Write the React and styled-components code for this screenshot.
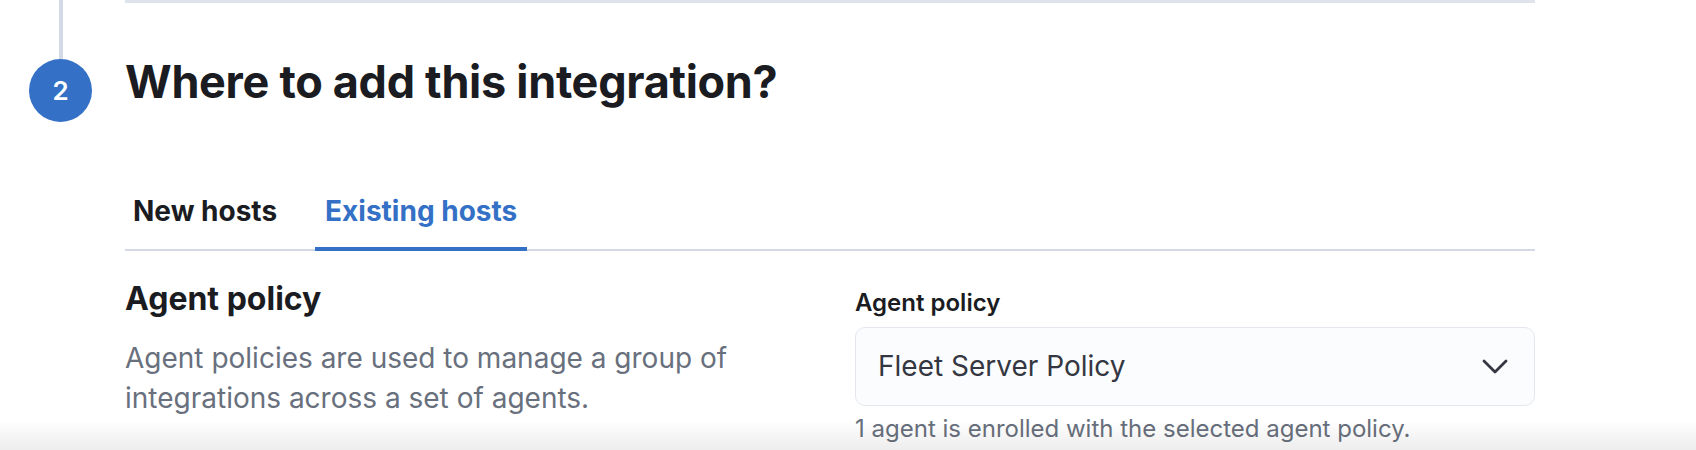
import React, { useState } from 'react'
import styled, { createGlobalStyle } from 'styled-components'

const GlobalStyle = createGlobalStyle`
	html, body {
		margin: 0;
		padding: 0;
		background: #ffffff;
		overflow: hidden;
	}
	body {
		font-family: Inter, 'Noto Sans', 'Liberation Sans', sans-serif;
		color: #1a1c21;
	}
	#root {
		height: 450px;
	}
`

const tabs = ['New hosts', 'Existing hosts']

const App = () => {
	const [active, setActive] = useState('Existing hosts')

	return (
		<>
			<GlobalStyle />
			<Step>
				<Connector />
				<Divider />
				<StepNumber>2</StepNumber>
				<Title>Where to add this integration?</Title>
				<span />
				<Body>
					<TabBar>
						{tabs.map((t) => (
							<Tab key={t} active={t === active} onClick={() => setActive(t)}>
								{t}
							</Tab>
						))}
					</TabBar>
					<FormRow>
						<Description>
							<h3>Agent policy</h3>
							<p>
								Agent policies are used to manage a group of integrations across a
								set of agents.
							</p>
						</Description>
						<Field>
							<Label>Agent policy</Label>
							<Select>
								<span>Fleet Server Policy</span>
								<svg width='26' height='15' viewBox='0 0 26 15' fill='none'>
									<path
										d='M2 2l11 11L24 2'
										stroke='#343741'
										strokeWidth='2.8'
										strokeLinecap='round'
										strokeLinejoin='round'
									/>
								</svg>
							</Select>
							<Help>1 agent is enrolled with the selected agent policy.</Help>
						</Field>
					</FormRow>
				</Body>
			</Step>
			<BottomShade />
		</>
	)
}

const Step = styled.section`
	display: grid;
	grid-template-columns: 63px 1410px;
	column-gap: 33px;
	padding-left: 29px;
`

const Connector = styled.div`
	justify-self: center;
	width: 4px;
	height: 59px;
	background: #d3dae6;
`

const Divider = styled.div`
	align-self: start;
	height: 3px;
	background: #dfe4ec;
`

const StepNumber = styled.div`
	width: 63px;
	height: 63px;
	border-radius: 50%;
	background: #3471c6;
	color: #ffffff;
	display: flex;
	align-items: center;
	justify-content: center;
	font-size: 26px;
	font-weight: 600;
`

const Title = styled.h2`
	margin: -4px 0 0;
	align-self: start;
	font-size: 45px;
	line-height: 1.2;
	font-weight: 700;
	letter-spacing: -0.3px;
	color: #1a1c21;
`

const Body = styled.div`
	display: flex;
	flex-direction: column;
`

const TabBar = styled.div`
	display: flex;
	gap: 28px;
	margin-top: 57px;
	padding-left: 0;
	box-shadow: inset 0 -2px 0 #d3dae6;
`

const Tab = styled.button`
	background: transparent;
	border: none;
	border-bottom: 4px solid ${(p) => (p.active ? '#3471c6' : 'transparent')};
	padding: 16px 10px 18px;
	font-family: inherit;
	font-size: 28px;
	line-height: 1.2;
	font-weight: 700;
	color: ${(p) => (p.active ? '#3471c6' : '#1a1c21')};
	cursor: pointer;

	&:first-child {
		padding-left: 8px;
	}
`

const FormRow = styled.div`
	display: grid;
	grid-template-columns: 1fr 680px;
	column-gap: 90px;
	margin-top: 29px;
`

const Description = styled.div`
	h3 {
		margin: 0;
		font-size: 32px;
		line-height: 1.2;
		font-weight: 700;
		color: #1a1c21;
	}
	p {
		margin: 20px 0 0;
		font-size: 28px;
		line-height: 40px;
		color: #69707d;
	}
`

const Field = styled.div`
	display: flex;
	flex-direction: column;
	padding-top: 9px;
`

const Label = styled.label`
	font-size: 24px;
	line-height: 1.2;
	font-weight: 600;
	color: #1a1c21;
`

const Select = styled.div`
	margin-top: 10px;
	height: 79px;
	box-sizing: border-box;
	border: 1px solid #e4e8ee;
	border-radius: 10px;
	background: #fbfcfd;
	display: flex;
	align-items: center;
	justify-content: space-between;
	padding: 0 26px 0 22px;
	font-size: 28px;
	line-height: 1.2;
	color: #343741;
`

const Help = styled.div`
	margin-top: 9px;
	font-size: 24px;
	line-height: 1.2;
	color: #69707d;
`

const BottomShade = styled.div`
	position: fixed;
	left: 0;
	right: 0;
	bottom: 0;
	height: 30px;
	pointer-events: none;
	background: linear-gradient(to bottom, rgba(0, 0, 0, 0), rgba(0, 0, 0, 0.07));
`

export default App
